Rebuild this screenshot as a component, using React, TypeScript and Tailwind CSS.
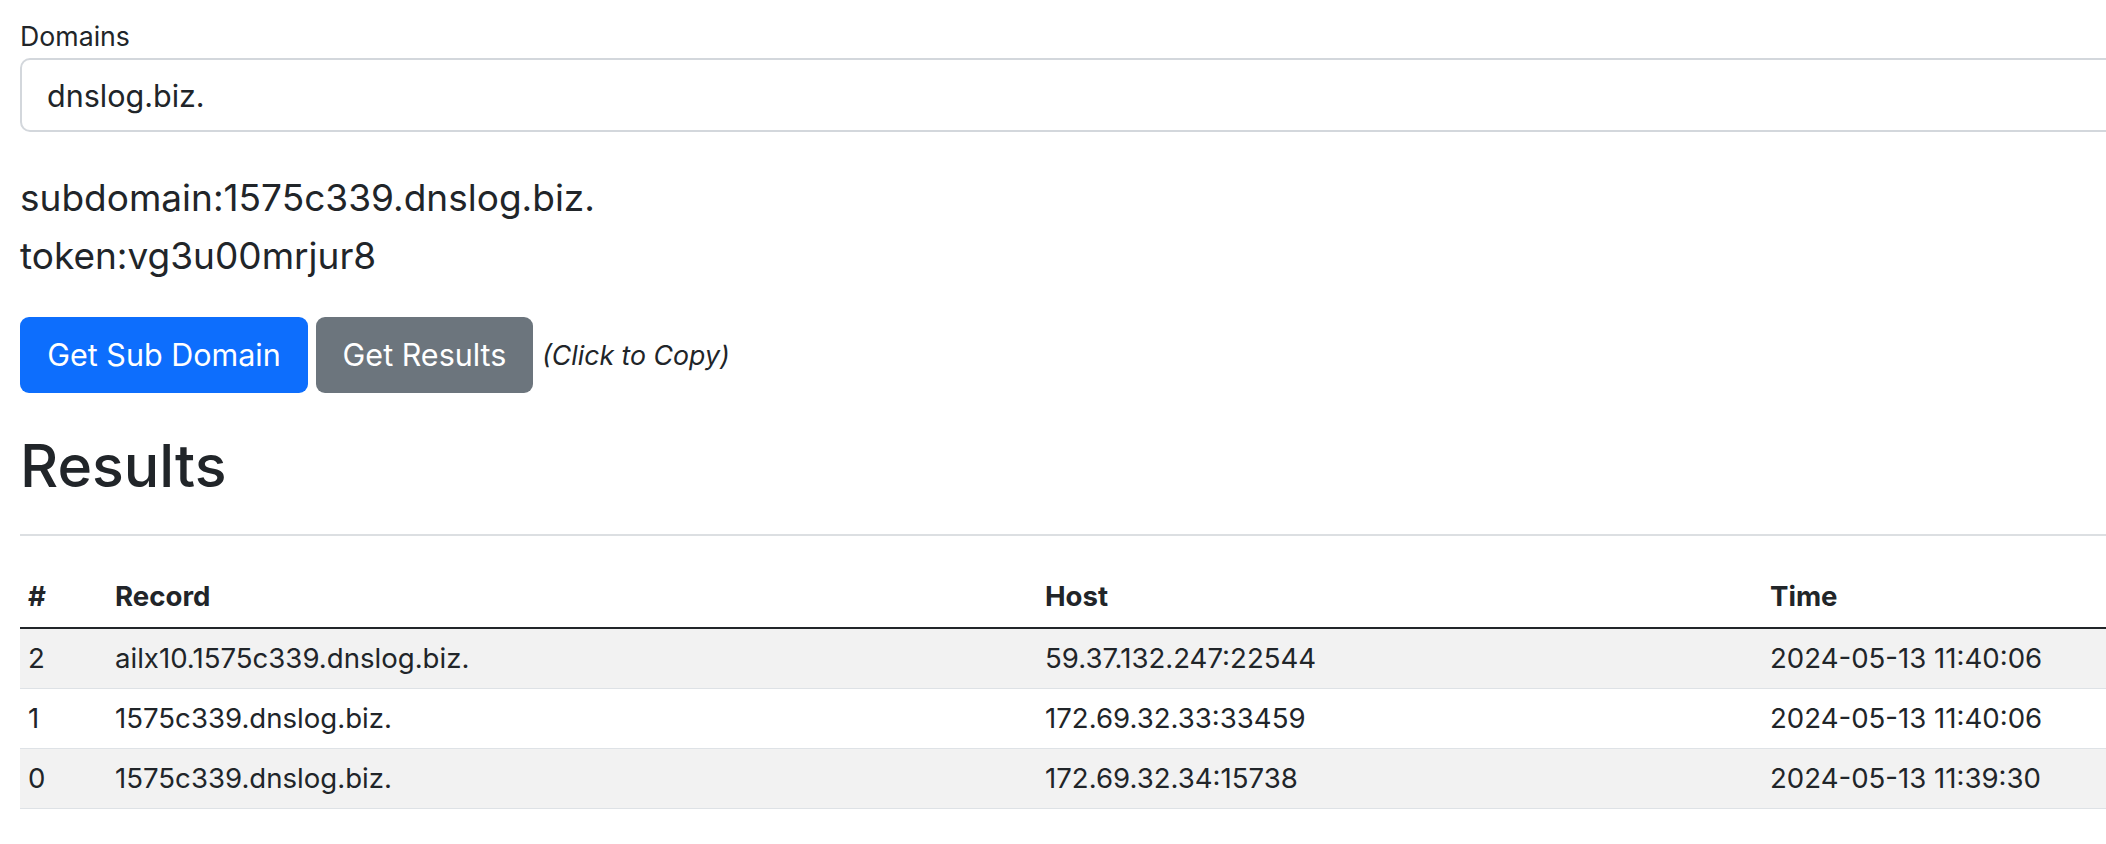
import React from "react";

const rows = [
  { id: "2", record: "ailx10.1575c339.dnslog.biz.", host: "59.37.132.247:22544", time: "2024-05-13 11:40:06" },
  { id: "1", record: "1575c339.dnslog.biz.", host: "172.69.32.33:33459", time: "2024-05-13 11:40:06" },
  { id: "0", record: "1575c339.dnslog.biz.", host: "172.69.32.34:15738", time: "2024-05-13 11:39:30" },
];

export default function App() {
  return (
    <div className="w-[2106px] h-[844px] overflow-hidden bg-white text-[#212529] font-['Inter',sans-serif]">
      <div className="w-[2400px] pl-[20px] pt-[17px]">
        <label className="block text-[26.7px] leading-[39px] mb-[2px]">Domains</label>
        <input
          readOnly
          value="dnslog.biz."
          className="block w-full h-[74px] border-2 border-[#d3d7dc] rounded-[10px] pl-[25px] text-[30.5px] text-[#212529] bg-white outline-none font-['Inter',sans-serif]"
        />
        <div className="mt-[37px] text-[37px] leading-[58px]">subdomain:1575c339.dnslog.biz.</div>
        <div className="text-[37px] leading-[58px]">token:vg3u00mrjur8</div>
        <div className="mt-[32px] flex items-center">
          <button className="w-[288px] h-[76px] rounded-[9px] bg-[#0d6efd] text-white text-[30.5px] leading-none">
            Get Sub Domain
          </button>
          <button className="ml-[8px] w-[217px] h-[76px] rounded-[9px] bg-[#6c757d] text-white text-[30.5px] leading-none">
            Get Results
          </button>
          <span className="ml-[9px] italic text-[26.7px] leading-[39px]">(Click to Copy)</span>
        </div>
        <h1 className="mt-[34px] text-[59px] leading-[77px] font-medium">Results</h1>
        <div className="mt-[30px] h-[2px] bg-[#dcdfe2]" />
        <table className="mt-[30px] table-fixed w-full border-collapse text-[27.6px] leading-[39px]">
          <colgroup>
            <col className="w-[87px]" />
            <col className="w-[930px]" />
            <col className="w-[725px]" />
            <col />
          </colgroup>
          <thead>
            <tr className="border-b-2 border-[#212529]">
              <th className="h-[62px] px-[8px] text-left font-bold">#</th>
              <th className="h-[62px] px-[8px] text-left font-bold">Record</th>
              <th className="h-[62px] px-[8px] text-left font-bold">Host</th>
              <th className="h-[62px] px-[8px] text-left font-bold">Time</th>
            </tr>
          </thead>
          <tbody>
            {rows.map((r, i) => (
              <tr key={r.id} className={`border-b border-[#dee2e6] ${i % 2 === 0 ? "bg-[#f2f2f2]" : "bg-white"}`}>
                <td className="h-[60px] px-[8px]">{r.id}</td>
                <td className="h-[60px] px-[8px]">{r.record}</td>
                <td className="h-[60px] px-[8px]">{r.host}</td>
                <td className="h-[60px] px-[8px]">{r.time}</td>
              </tr>
            ))}
          </tbody>
        </table>
      </div>
    </div>
  );
}
